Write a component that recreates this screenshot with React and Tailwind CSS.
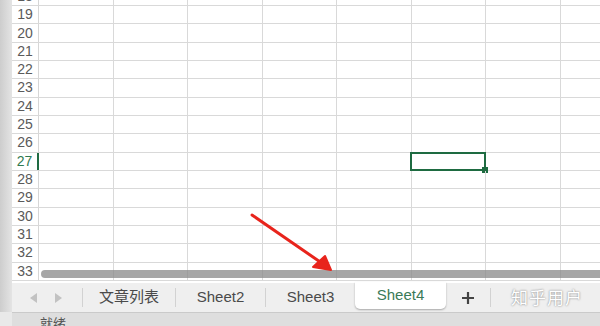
import React from 'react';

const rows = [18, 19, 20, 21, 22, 23, 24, 25, 26, 27, 28, 29, 30, 31, 32, 33];
const cols = [0, 1, 2, 3, 4, 5, 6, 7];
const font = { fontFamily: '"Liberation Sans", "Noto Sans CJK SC", sans-serif' };

function Divider() {
  return <div className="w-px h-[19px] bg-[#d2d2d2] shrink-0" />;
}

function Tab({ label, width }) {
  return (
    <div className={`${width} h-full flex items-center justify-center text-[15px] text-[#4a4a4a] shrink-0`}>
      {label}
    </div>
  );
}

export default function App() {
  return (
    <div className="w-[600px] h-[326px] overflow-hidden relative flex flex-col bg-white" style={font}>
      <div className="flex h-[312px]">
        {/* window edge */}
        <div className="w-[12px] h-full shrink-0 bg-gradient-to-r from-[#cdcdcd] to-[#e4e4e4]" />

        <div className="flex-1 flex flex-col min-w-0">
          {/* sheet grid */}
          <div className="relative h-[283px] overflow-hidden">
            <div className="-mt-[12.33px]">
              {rows.map((r) => (
                <div key={r} className="flex h-[18.33px] border-b border-[#d9d9d9]">
                  <div
                    className={`w-[27px] shrink-0 flex items-center justify-center text-[14px] border-r ${
                      r === 27 ? 'text-[#2f7a50] border-r-2 border-[#1f6b43]' : 'text-[#5a5a5a] border-[#d6d6d6]'
                    }`}
                  >
                    {r}
                  </div>
                  {cols.map((c) => (
                    <div key={c} className="relative w-[74.5px] shrink-0 border-r border-[#d9d9d9]">
                      {r === 27 && c === 5 && (
                        <div className="absolute -top-px -left-[2px] -right-px -bottom-px border-2 border-[#1e6b41]">
                          <div className="absolute -right-[4px] -bottom-[4px] w-[6px] h-[6px] bg-[#1e6b41]" />
                        </div>
                      )}
                    </div>
                  ))}
                </div>
              ))}
            </div>
            {/* horizontal scrollbar */}
            <div className="absolute top-[270px] left-[29px] -right-[10px] h-[8px] rounded-full bg-[#888888]/75" />
          </div>

          {/* sheet tabs */}
          <div className="h-[29px] bg-[#efefef] flex items-center">
            <div className="w-[70px] h-full flex items-center shrink-0">
              <svg width="10" height="12" viewBox="0 0 10 12" className="ml-[16px]">
                <path d="M9 1 L2 6 L9 11 Z" fill="#c2c2c2" />
              </svg>
              <svg width="10" height="12" viewBox="0 0 10 12" className="ml-[16px]">
                <path d="M1 1 L8 6 L1 11 Z" fill="#c2c2c2" />
              </svg>
            </div>
            <Divider />
            <Tab label="文章列表" width="w-[92px]" />
            <Divider />
            <Tab label="Sheet2" width="w-[89px]" />
            <Divider />
            <Tab label="Sheet3" width="w-[89px]" />
            <div className="w-[91px] h-[27px] self-start -mt-px bg-white rounded-b-[5px] shadow-[0_1px_2px_rgba(0,0,0,0.3)] flex items-center justify-center text-[15px] text-[#3a7a58] shrink-0">
              Sheet4
            </div>
            <div className="w-[44px] h-full flex items-center justify-center shrink-0">
              <svg width="14" height="14" viewBox="0 0 14 14">
                <path d="M7 1 V13 M1 7 H13" stroke="#444" strokeWidth="2.2" />
              </svg>
            </div>
            <Divider />
          </div>
        </div>
      </div>

      {/* status bar */}
      <div className="flex h-[14px]">
        <div className="w-[12px] shrink-0 bg-[#e9e9e9]" />
        <div className="flex-1 bg-[#dedede] border-t border-[#cacaca] pl-[28px] pt-[4px] text-[13px] leading-none text-[#555]">
          就绪
        </div>
      </div>

      {/* watermark */}
      <div className="absolute left-[511px] top-[286px] text-[17px] tracking-[1px] text-white [text-shadow:0_0_2px_rgba(0,0,0,0.55)]">
        知乎用户
      </div>

      {/* red arrow annotation */}
      <svg className="absolute inset-0 pointer-events-none" width="600" height="326" viewBox="0 0 600 326">
        <path d="M252 215 L326 266" stroke="#e8241c" strokeWidth="3" strokeLinecap="round" />
        <path d="M331 270 L313 267 L325 256 Z" fill="#e8241c" stroke="#e8241c" strokeWidth="2" strokeLinejoin="round" />
      </svg>
    </div>
  );
}
